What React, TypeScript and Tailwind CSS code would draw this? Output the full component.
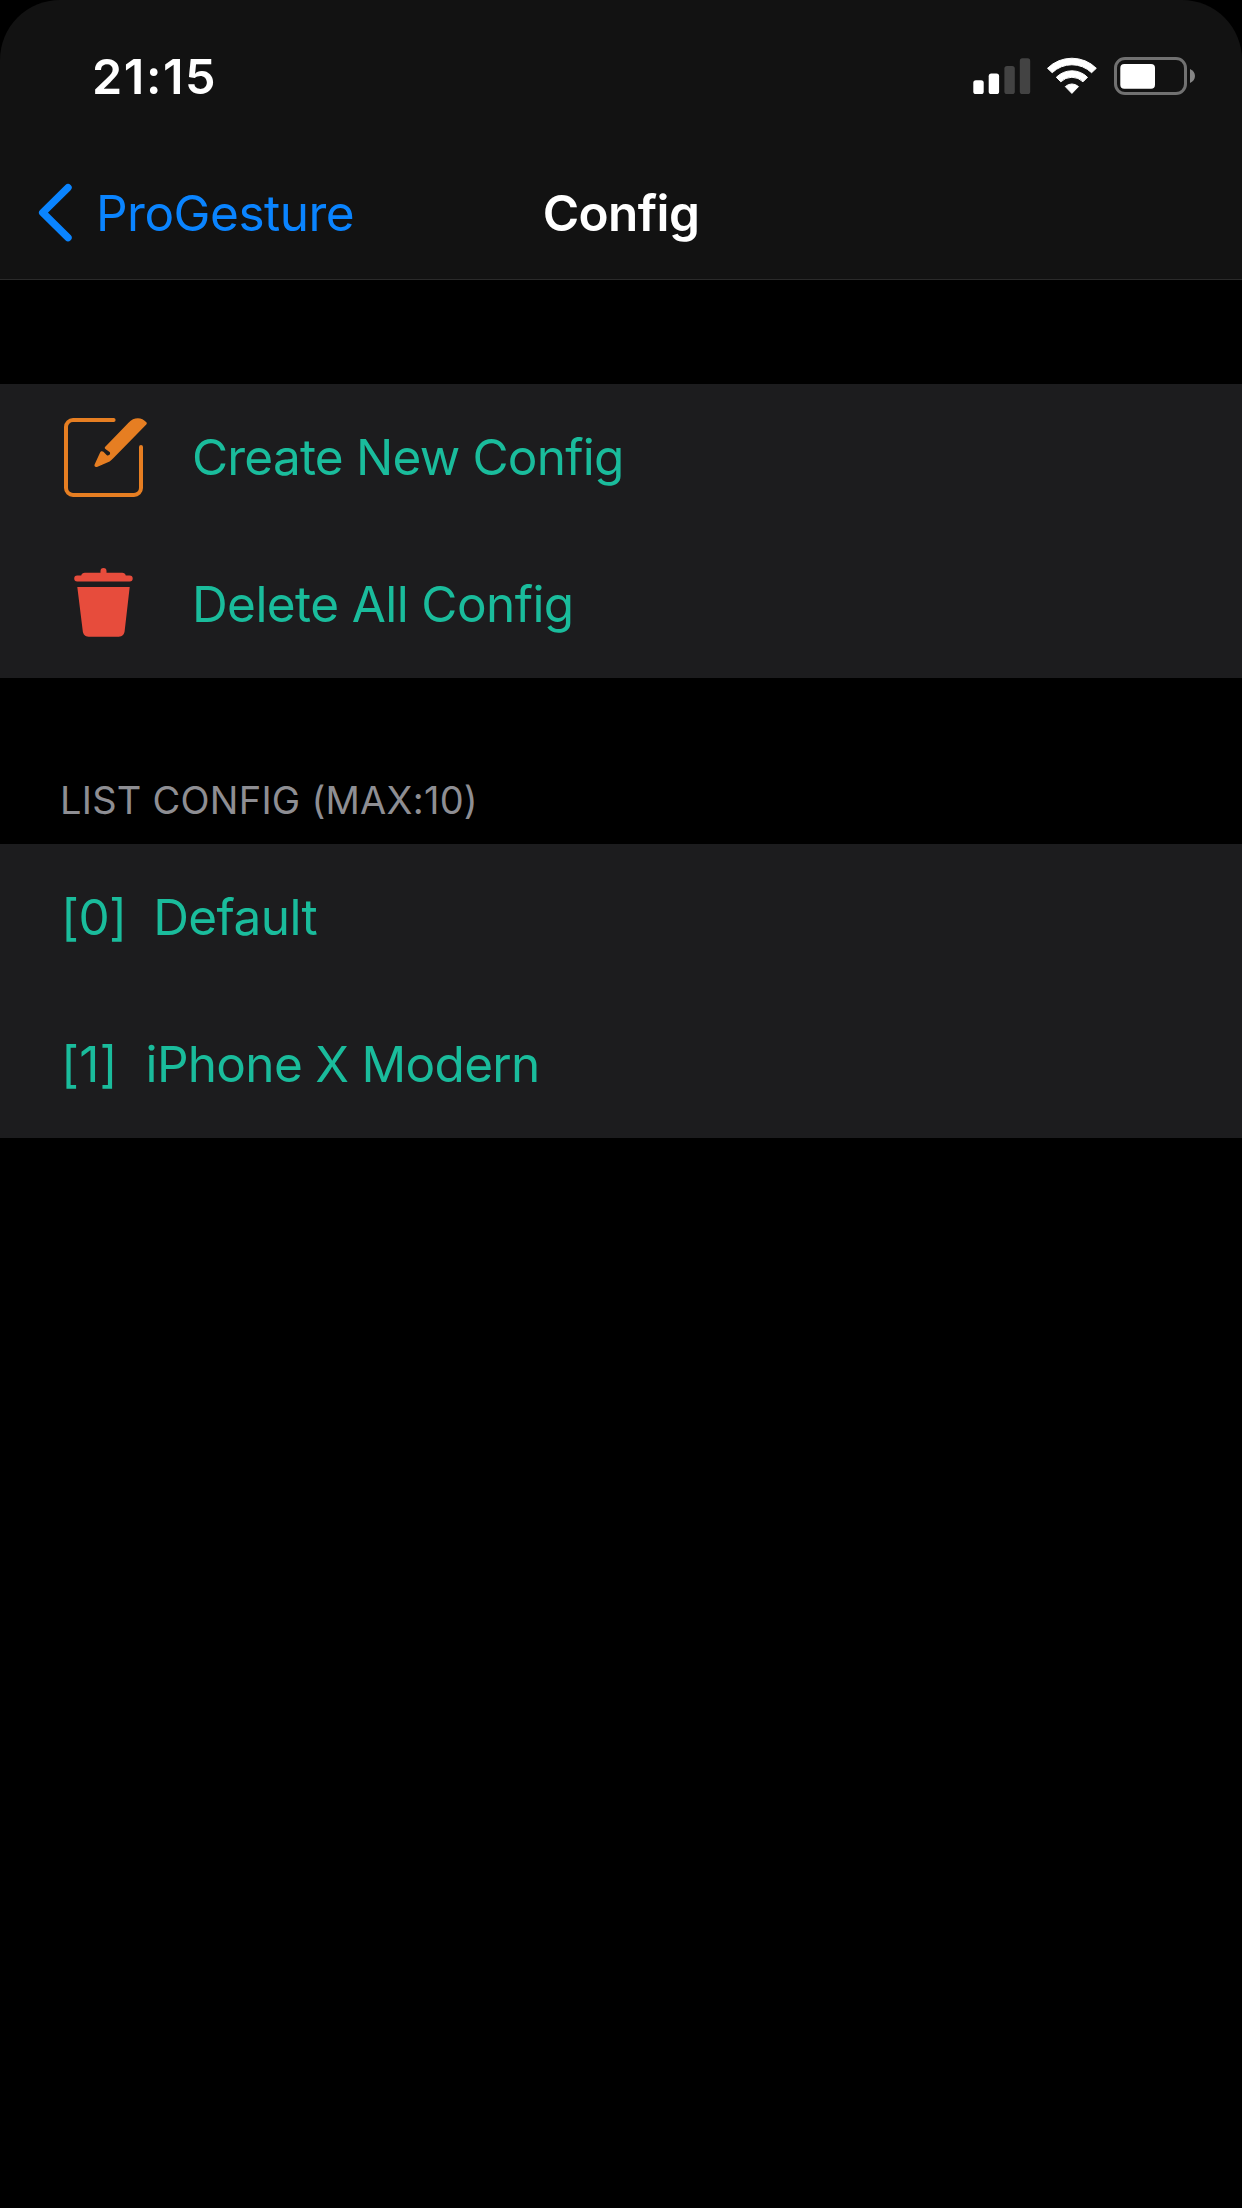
import type { ReactNode } from "react";

function SignalIcon() {
  return (
    <svg className="h-[132px] w-[57px] shrink-0" viewBox="973 0 57 132" overflow="visible">
      <rect x="973.3" y="80.2" width="10.4" height="13.8" rx="2.6" fill="#fff" />
      <rect x="988.7" y="73.6" width="10.4" height="20.4" rx="2.6" fill="#fff" />
      <rect x="1004.4" y="66" width="10.4" height="28" rx="2.6" fill="#434343" />
      <rect x="1019.8" y="58.3" width="10.4" height="35.7" rx="2.6" fill="#434343" />
    </svg>
  );
}

function WifiIcon() {
  return (
    <svg className="h-[132px] w-[52px] shrink-0" viewBox="1046 0 52 132">
      <g fill="#fff" stroke="#fff" strokeWidth="1" strokeLinejoin="round">
        <path d="M1047.5 68.3A34.6 34.6 0 0 1 1096.3 68.3L1091.6 72.7A28.4 28.4 0 0 0 1052.2 72.7Z" />
        <path d="M1056.3 77.3A22 22 0 0 1 1087.5 77.3L1083 81.8A15.8 15.8 0 0 0 1060.8 81.8Z" />
        <path d="M1065.3 86.6A9.6 9.6 0 0 1 1078.5 86.6L1071.9 93.4Z" />
      </g>
    </svg>
  );
}

function BatteryIcon() {
  return (
    <svg className="h-[132px] w-[82px] shrink-0" viewBox="1114 0 82 132">
      <rect x="1115.5" y="58.5" width="70" height="35" rx="9.5" fill="none" stroke="#717171" strokeWidth="3" />
      <rect x="1120.3" y="64" width="34.7" height="24.7" rx="4" fill="#fff" />
      <path d="M1190 69C1193 70.3 1195 73 1195 76S1193 81.700 1190 83Z" fill="#868686" />
    </svg>
  );
}

function ComposeIcon() {
  return (
    <svg className="h-[147px] w-[110px] shrink-0" viewBox="0 -26 110 147">
      <path
        d="M63.600 10H23A7 7 0 0 0 16 17V78A7 7 0 0 0 23 85H84A7 7 0 0 0 91 78V37"
        fill="none"
        stroke="#e67e22"
        strokeWidth="4"
        strokeLinecap="round"
      />
      <path
        d="M55 37L78.500 12.800C84 7 91.500 6.800 96.600 12.600Q97.200 13.600 96.300 14.600L63 48.600Q61.500 50.300 59.600 51.400L47 56.900C45.200 57.500 44 56.200 44.600 54.600L50.100 42.600C50.700 41 52.300 40.700 53.400 41.800L56.600 44.900C58.600 46.600 61.200 43.900 59.600 42.100L55.400 39Q54.200 38 55 37Z"
        fill="#e67e22"
      />
    </svg>
  );
}

function TrashIcon() {
  return (
    <svg className="h-[147px] w-[110px] shrink-0" viewBox="-10 -29 110 147">
      <g fill="#e74c3c">
        <path d="M17.200 15.500H21.200C21.800 13.600 22.800 12.700 24.800 12.700H40.500V11A3 3 0 0 1 46.500 11V12.700H62.200C64.200 12.700 65.200 13.600 65.800 15.500H69.700A3 3 0 0 1 69.700 21.500H17.200A3 3 0 0 1 17.200 15.500Z" />
        <path d="M17.300 27H69.700L64.700 70.600C64.400 74.500 62.300 76.700 58.800 76.700H28.600C25.100 76.700 23 74.500 22.700 70.600Z" />
      </g>
    </svg>
  );
}

function ActionRow({ icon, children }: { icon: ReactNode; children: ReactNode }) {
  return (
    <button className="flex h-[147px] w-full items-center gap-8 pl-[50px] text-left">
      {icon}
      {children}
    </button>
  );
}

export default function App() {
  return (
    <div className="min-h-[2208px] w-full bg-black font-['Inter',sans-serif] text-[49.5px] leading-[147px] whitespace-pre text-[#1abc9c]">
      <header className="flex h-[280px] flex-col rounded-t-[60px] border-b border-[#2a2a2a] bg-[#121212]">
        <div className="flex h-[132px] justify-between pr-[46px] pl-[92px]">
          <span className="pt-[21px] text-[48.5px] leading-[111px] font-semibold tracking-[1.6px] text-white">21:15</span>
          <div className="flex gap-4">
            <SignalIcon />
            <WifiIcon />
            <BatteryIcon />
          </div>
        </div>
        <nav className="grid h-[147px] grid-cols-[1fr_auto_1fr] pt-[15px] leading-[132px]">
          <a className="flex items-center gap-5 pl-[38px] tracking-[-0.5px] text-[#0a84ff]">
            <svg className="h-[60px] w-[38px]" viewBox="38 183 38 60">
              <path d="M68 187.600L42.700 212.700L68 237.700" fill="none" stroke="#0a84ff" strokeWidth="7.400" strokeLinecap="round" strokeLinejoin="round" />
            </svg>
            ProGesture
          </a>
          <h1 className="font-semibold tracking-[-0.65px] text-white">Config</h1>
        </nav>
      </header>

      <main>
        <section className="mt-[104px] bg-[#1c1c1e]">
          <ActionRow icon={<ComposeIcon />}>
            <span className="tracking-[-0.8px]">Create New Config</span>
          </ActionRow>
          <ActionRow icon={<TrashIcon />}>
            <span className="tracking-[-0.6px]">Delete All Config</span>
          </ActionRow>
        </section>

        <h2 className="h-[166px] pt-[76px] pl-[60px] text-[38px] leading-[92px] tracking-[0.25px] text-[#8e8e93]">LIST CONFIG (MAX:10)</h2>

        <section className="bg-[#1c1c1e] pl-[61px]">
          <div className="h-[147px] tracking-[-0.6px]">{"[0]  Default"}</div>
          <div className="h-[147px] tracking-[-0.7px]">
            <span className="tracking-[0.1px]">{"[1]  "}</span>iPhone X Modern
          </div>
        </section>
      </main>
    </div>
  );
}
